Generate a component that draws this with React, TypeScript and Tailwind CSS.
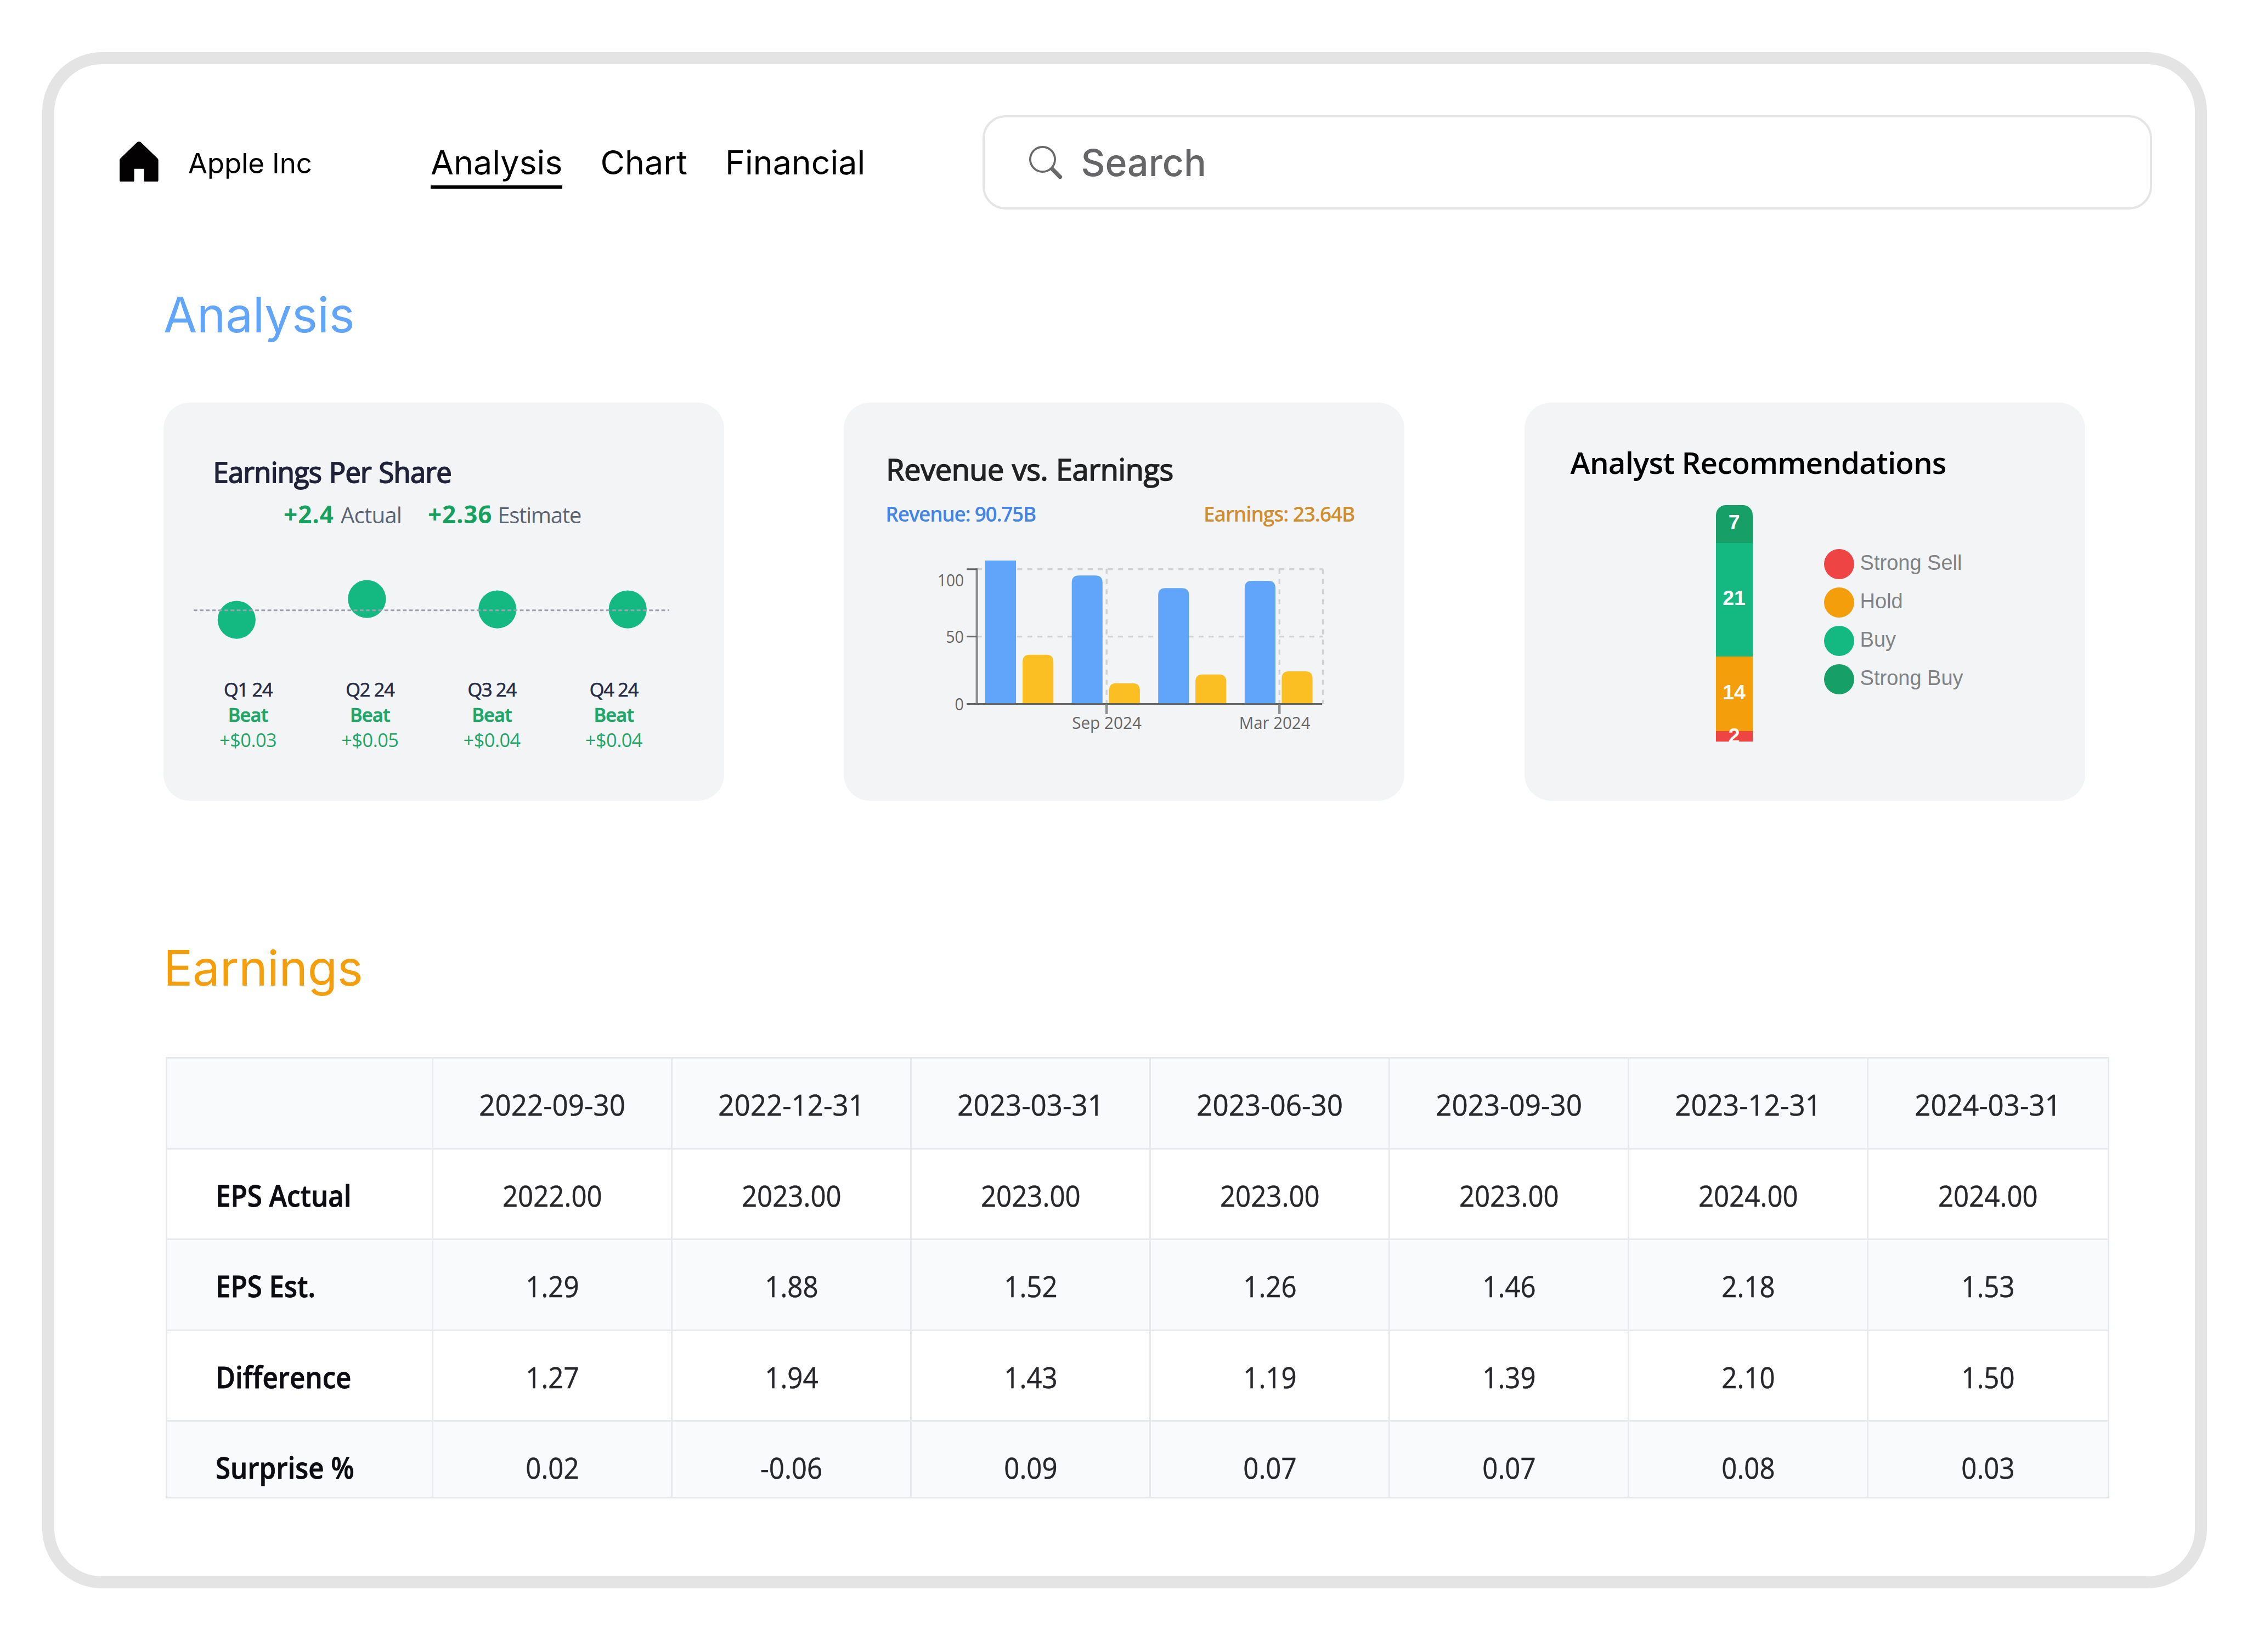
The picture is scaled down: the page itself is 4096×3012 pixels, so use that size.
const NAV = ["Analysis", "Chart", "Financial"];

const QUARTERS = [
  { label: "Q1 24", delta: "+$0.03" },
  { label: "Q2 24", delta: "+$0.05" },
  { label: "Q3 24", delta: "+$0.04" },
  { label: "Q4 24", delta: "+$0.04" },
];

const EPS_DOTS = [
  { x: 591.5, y: 1549.8 },
  { x: 917.5, y: 1497.6 },
  { x: 1244, y: 1523.7 },
  { x: 1570, y: 1523.7 },
];

const BASE_Y = 1760.7;
const BARS = [
  { x: 2464.5, top: 1401.8, color: "#60a5fa", r: 0 },
  { x: 2680.8, top: 1439.3, color: "#60a5fa", r: 18 },
  { x: 2897, top: 1470.8, color: "#60a5fa", r: 18 },
  { x: 3113.3, top: 1452.7, color: "#60a5fa", r: 18 },
  { x: 2557.9, top: 1637.5, color: "#fbbf24", r: 18 },
  { x: 2774.2, top: 1709, color: "#fbbf24", r: 18 },
  { x: 2990.2, top: 1687, color: "#fbbf24", r: 18 },
  { x: 3206, top: 1679, color: "#fbbf24", r: 18 },
];

const LEGEND = [
  { label: "Strong Sell", dot: "bg-[#ef4444]" },
  { label: "Hold", dot: "bg-[#f59e0b]" },
  { label: "Buy", dot: "bg-[#14b981]" },
  { label: "Strong Buy", dot: "bg-[#169f67]" },
];

const DATES = ["2022-09-30", "2022-12-31", "2023-03-31", "2023-06-30", "2023-09-30", "2023-12-31", "2024-03-31"];

const ROWS = [
  { label: "EPS Actual", values: ["2022.00", "2023.00", "2023.00", "2023.00", "2023.00", "2024.00", "2024.00"] },
  { label: "EPS Est.", values: ["1.29", "1.88", "1.52", "1.26", "1.46", "2.18", "1.53"] },
  { label: "Difference", values: ["1.27", "1.94", "1.43", "1.19", "1.39", "2.10", "1.50"] },
  { label: "Surprise %", values: ["0.02", "-0.06", "0.09", "0.07", "0.07", "0.08", "0.03"] },
];

function HomeIcon() {
  return (
    <svg viewBox="0 0 97 101" className="h-[73.5px] w-[70.7px] shrink-0" fill="#030102">
      <path d="M44 1.8Q48.5 -1.4 53 1.8L95 42.3Q97 44.3 97 47V97Q97 101 93 101H65Q61 101 61 97V68.5H36.5V97Q36.5 101 32.5 101H4Q0 101 0 97V47Q0 44.3 2 42.3Z" />
    </svg>
  );
}

function SearchIcon() {
  return (
    <svg viewBox="0 0 83 83" className="size-[60.5px] shrink-0" fill="none" stroke="#6a686b">
      <circle cx="33.6" cy="33.6" r="31" strokeWidth="5.2" />
      <path d="M55.4 55.4L59 59" strokeWidth="9.5" />
      <path d="M59 59L77.4 77.6" strokeWidth="10.2" strokeLinecap="round" />
    </svg>
  );
}

function Header() {
  return (
    <header className="mt-[93px] flex h-[172px] items-center pr-[78px] pl-[119px]">
      <div className="flex w-[567px] items-center gap-[54px]">
        <div className="-mt-[3px]">
          <HomeIcon />
        </div>
        <span className="mt-[2px] text-[51.2px] leading-[70px] tracking-[-0.2px]">Apple Inc</span>
      </div>
      <nav className="flex gap-[69px] text-[60.9px] leading-[84px]">
        {NAV.map((item, i) => (
          <a key={item} className={i === 0 ? "mt-[5px] border-b-[6px] border-black" : "mt-[5px] border-b-[6px] border-transparent"}>
            {item}
          </a>
        ))}
      </nav>
      <div className="ml-auto flex h-[172px] w-[2132px] items-center gap-[34px] rounded-[42px] border-4 border-[#e5e5e5] pl-[81px]">
        <SearchIcon />
        <span className="text-[68px] leading-[90px] font-medium text-[#666668]">Search</span>
      </div>
    </header>
  );
}

function EpsCard() {
  return (
    <section className="h-[726px] w-[1022px] rounded-[48px] bg-[#f3f4f6] pt-[92px]">
      <h3 className="ml-[90.5px] text-[50.6px] leading-[70px] tracking-[-0.7px] [word-spacing:1px] text-[#1f2238] [-webkit-text-stroke:1.8px_#1f2238]">
        Earnings Per Share
      </h3>
      <div className="mt-[11px] ml-[219px] flex items-baseline leading-[60px] whitespace-nowrap">
        <b className="text-[44px] font-bold tracking-[1px] text-[#16a05f]">+2.4</b>
        <span className="ml-[12px] text-[40.3px] tracking-[-0.9px] text-[#5b6472]">Actual</span>
        <b className="ml-[48px] text-[44px] font-bold tracking-[0.8px] text-[#16a05f]">+2.36</b>
        <span className="ml-[10px] text-[40.3px] tracking-[-1.4px] text-[#5b6472]">Estimate</span>
      </div>
      <svg viewBox="484 1440 1190 170" className="mt-[81px] ml-[55px] h-[124px] w-[867px]">
        {EPS_DOTS.map((d) => (
          <circle key={d.x} cx={d.x} cy={d.y} r="47.5" fill="#14b981" />
        ))}
        <line x1="484" x2="1674" y1="1526" y2="1526" stroke="#9ca3af" strokeWidth="4.4" strokeDasharray="9.2 6.2" />
      </svg>
      <div className="mt-[60px] ml-[43px] grid w-[889px] grid-cols-4 text-center text-[34.3px] leading-[46px]">
        {QUARTERS.map((q) => (
          <div key={q.label}>
            <div className="tracking-[-1.2px] text-[#252a45] [-webkit-text-stroke:0.7px_#252a45]">{q.label}</div>
            <div className="font-semibold tracking-[-0.8px] text-[#1ea768] [-webkit-text-stroke:0.7px_#1ea768]">Beat</div>
            <div className="tracking-[-0.5px] text-[#1ea768]">{q.delta}</div>
          </div>
        ))}
      </div>
    </section>
  );
}

function RevenueCard() {
  return (
    <section className="h-[726px] w-[1022px] rounded-[48px] bg-[#f3f4f6] pt-[86px]">
      <h3 className="ml-[77px] text-[54px] leading-[70px] tracking-[-0.4px] [word-spacing:1px] text-[#222222] [-webkit-text-stroke:1.6px_#222222]">
        Revenue vs. Earnings
      </h3>
      <div className="mt-[22px] flex justify-between pr-[91px] pl-[76px] text-[37px] leading-[50px] font-semibold">
        <span className="tracking-[-1.3px] text-[#4285e6]">Revenue: 90.75B</span>
        <span className="tracking-[-1.1px] text-[#d18e2e]">Earnings: 23.64B</span>
      </div>
      <svg viewBox="2330 1395 1070 455" className="mt-[55px] ml-[160px] h-[331.6px] w-[779.8px] font-['Open_Sans',sans-serif]">
        <g stroke="#cfd2d3" strokeWidth="4.6" strokeDasharray="12.6 12.6">
          <line x1="2443.5" x2="3309" y1="1423.5" y2="1423.5" />
          <line x1="2443.5" x2="3309" y1="1592" y2="1592" />
          <line x1="2768" x2="2768" y1="1423" y2={BASE_Y} />
          <line x1="3200.3" x2="3200.3" y1="1423" y2={BASE_Y} />
          <line x1="3309" x2="3309" y1="1423" y2={BASE_Y} />
        </g>
        {BARS.map(({ x, top, color, r }) => (
          <path key={x} fill={color} d={`M${x} ${BASE_Y}V${top + r}q0 ${-r} ${r} ${-r}H${x + 77 - r}q${r} 0 ${r} ${r}V${BASE_Y}Z`} />
        ))}
        <line x1="2443.5" x2="2443.5" y1="1421.5" y2={BASE_Y} stroke="#8f8f90" strokeWidth="6" />
        <g stroke="#666666" strokeWidth="4.2">
          <line x1="2418" x2="3307" y1={BASE_Y} y2={BASE_Y} />
          <line x1="2418" x2="2444" y1="1423.5" y2="1423.5" />
          <line x1="2418" x2="2444" y1="1592" y2="1592" />
        </g>
        <g stroke="#8f8f90" strokeWidth="6">
          <line x1="2768" x2="2768" y1="1762" y2="1786" />
          <line x1="3200.3" x2="3200.3" y1="1762" y2="1786" />
        </g>
        <g fill="#666666" fontSize="42">
          <text x="2411" y="1466.5" textAnchor="end" textLength="66" lengthAdjust="spacingAndGlyphs">100</text>
          <text x="2411" y="1607.5" textAnchor="end" textLength="45" lengthAdjust="spacingAndGlyphs">50</text>
          <text x="2411" y="1776" textAnchor="end" textLength="22.5" lengthAdjust="spacingAndGlyphs">0</text>
          <text x="2768.5" y="1823.7" textAnchor="middle" textLength="174" lengthAdjust="spacingAndGlyphs">Sep 2024</text>
          <text x="3188.5" y="1823.7" textAnchor="middle" textLength="178" lengthAdjust="spacingAndGlyphs">Mar 2024</text>
        </g>
      </svg>
    </section>
  );
}

function AnalystCard() {
  return (
    <section className="h-[726px] w-[1022px] rounded-[48px] bg-[#f3f4f6] pt-[74px]">
      <h3 className="ml-[84px] text-[54.6px] leading-[70px] font-semibold tracking-[-0.8px] text-black">Analyst Recommendations</h3>
      <div className="mt-[43px] ml-[349px] flex items-start font-['Liberation_Sans',sans-serif]">
        <div className="flex h-[431px] w-[67px] flex-col overflow-hidden rounded-t-[18px] text-[37.5px] leading-[40px] font-bold text-white">
          <div className="flex h-[69px] items-center justify-center bg-[#169f67] pb-[7px]">7</div>
          <div className="flex h-[207px] items-center justify-center bg-[#14b981] pb-[7px]">21</div>
          <div className="flex h-[136px] items-center justify-center bg-[#f59e0b] pb-[6px]">14</div>
          <div className="flex h-[19px] items-center justify-center bg-[#ef4444] pb-[4px]">2</div>
        </div>
        <ul className="mt-[80px] ml-[130px] flex flex-col gap-[15px]">
          {LEGEND.map((l) => (
            <li key={l.label} className="flex h-[55px] items-center gap-[11px]">
              <span className={`size-[55px] rounded-full ${l.dot}`} />
              <span className="pb-[6px] text-[38px] leading-[44px] text-[#808285]">{l.label}</span>
            </li>
          ))}
        </ul>
      </div>
    </section>
  );
}

function EarningsTable() {
  const cell = "flex items-center justify-center border-r-[3px] border-b-[3px] border-[#e7e9ec] pt-[6px] last:border-r-0";
  const columns = "grid h-[165.5px] shrink-0 grid-cols-[485px_repeat(7,1fr)]";
  return (
    <div className="mt-[107px] flex h-[805px] w-[3543px] flex-col overflow-hidden border-[3px] border-[#e5e7eb] font-['Open_Sans',sans-serif] text-[53.5px] leading-[70px] text-[#26262b]">
      <div className={`${columns} bg-[#f9fafb]`}>
        <div className={cell} />
        {DATES.map((d) => (
          <div key={d} className={cell}>
            <span className="inline-block scale-x-[0.955] [-webkit-text-stroke:0.5px_#26262b]">{d}</span>
          </div>
        ))}
      </div>
      {ROWS.map((row, i) => (
        <div key={row.label} className={`${columns} ${i % 2 ? "bg-[#f9fafb]" : "bg-white"}`}>
          <div className="flex items-center border-r-[3px] border-b-[3px] border-[#e7e9ec] pt-[6px] pl-[88px] font-semibold text-[#0c0c12]">
            <span className="inline-block origin-left scale-x-[0.92] whitespace-nowrap [-webkit-text-stroke:0.8px_#0c0c12]">{row.label}</span>
          </div>
          {row.values.map((v, k) => (
            <div key={k} className={cell}>
              <span className="inline-block scale-x-[0.92] [-webkit-text-stroke:0.5px_#26262b]">{v}</span>
            </div>
          ))}
        </div>
      ))}
    </div>
  );
}

export default function App() {
  return (
    <div className="flow-root h-[3012px] w-[4096px] overflow-hidden bg-white font-['Inter',sans-serif] text-black">
      <main className="mt-[95px] ml-[77px] flow-root h-[2801px] w-[3946px] rounded-[109px] border-[22px] border-[#e4e4e4] bg-white">
        <Header />
        <div className="mt-[137px] ml-[199px]">
          <h2 className="text-[88.8px] leading-[110px] tracking-[-0.3px] text-[#60a5fa]">Analysis</h2>
          <div className="mt-[105px] flex gap-[218.3px] font-['Open_Sans',sans-serif]">
            <EpsCard />
            <RevenueCard />
            <AnalystCard />
          </div>
          <h2 className="mt-[250px] text-[88.8px] leading-[110px] tracking-[-0.3px] text-[#f59e0b]">Earnings</h2>
          <div className="ml-[4px]">
            <EarningsTable />
          </div>
        </div>
      </main>
    </div>
  );
}
